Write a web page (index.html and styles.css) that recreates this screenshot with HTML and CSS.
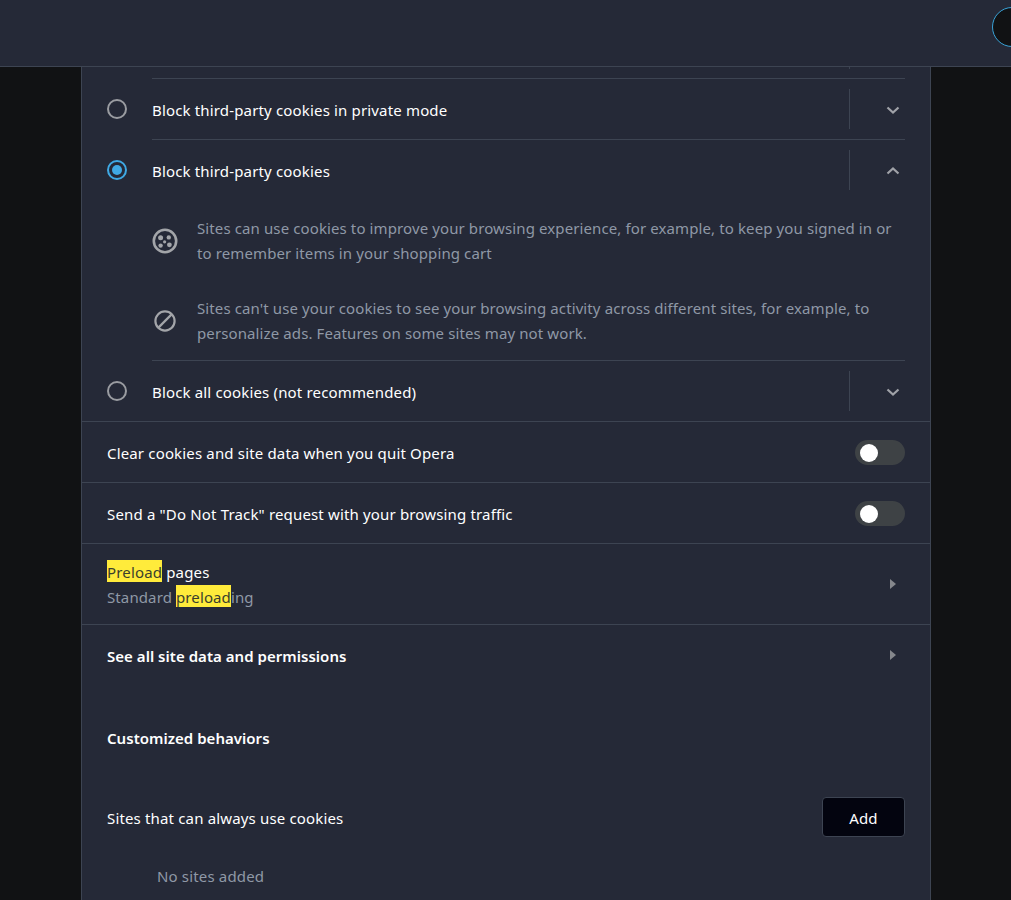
FILE: index.html
```html
<!DOCTYPE html>
<html lang="en">
<head>
<meta charset="utf-8">
<title>Cookies settings</title>
<link rel="stylesheet" href="styles.css">
</head>
<body>
<header class="topbar"><div class="search-circle"></div></header>
<main class="card">
  <div class="stub"><span class="stub-tick"></span></div>
  <div class="indent-sep"></div>
  <div class="radio-row">
    <span class="radio"></span>
    <span class="label">Block third-party cookies in private mode</span>
    <span class="vdiv"></span>
    <svg class="chev" viewBox="0 0 14 10"><path d="M1.5 2.5 7 7.6 12.5 2.5" /></svg>
  </div>
  <div class="indent-sep"></div>
  <div class="radio-row">
    <span class="radio on"></span>
    <span class="label">Block third-party cookies</span>
    <span class="vdiv"></span>
    <svg class="chev" viewBox="0 0 14 10"><path d="M1.5 7.5 7 2.4 12.5 7.5" /></svg>
  </div>
  <div class="detail">
    <div class="detail-item first">
      <svg class="detail-icon" viewBox="0 0 26 26"><circle cx="13" cy="13" r="11.2" class="ring thick"/><circle cx="8.6" cy="9.8" r="2.5" class="dot"/><circle cx="16.8" cy="9.4" r="2.2" class="dot"/><circle cx="12.6" cy="13.8" r="1.6" class="dot"/><circle cx="8.6" cy="17.6" r="2.2" class="dot"/><circle cx="17.4" cy="16.8" r="2.4" class="dot"/></svg>
      <p>Sites can use cookies to improve your browsing experience, for example, to keep you signed in or to remember items in your shopping cart</p>
    </div>
    <div class="detail-item second">
      <svg class="detail-icon" viewBox="0 0 26 26"><circle cx="13" cy="13" r="9.6" class="ring"/><path d="M6.4 19.6 19.6 6.4" class="ring"/></svg>
      <p>Sites can't use your cookies to see your browsing activity across different sites, for example, to personalize ads. Features on some sites may not work.</p>
    </div>
  </div>
  <div class="indent-sep"></div>
  <div class="radio-row">
    <span class="radio"></span>
    <span class="label">Block all cookies (not recommended)</span>
    <span class="vdiv"></span>
    <svg class="chev" viewBox="0 0 14 10"><path d="M1.5 2.5 7 7.6 12.5 2.5" /></svg>
  </div>
  <div class="row bordered">
    <span class="label">Clear cookies and site data when you quit Opera</span>
    <span class="toggle"><span class="knob"></span></span>
  </div>
  <div class="row bordered">
    <span class="label">Send a "Do Not Track" request with your browsing traffic</span>
    <span class="toggle"><span class="knob"></span></span>
  </div>
  <div class="row bordered tall">
    <div class="two-line">
      <div><mark>Preload</mark> pages</div>
      <div class="sub">Standard <mark>preload</mark>ing</div>
    </div>
    <span class="arrow"></span>
  </div>
  <div class="row bordered">
    <span class="label strong">See all site data and permissions</span>
    <span class="arrow"></span>
  </div>
  <h2 class="section-title">Customized behaviors</h2>
  <div class="add-row">
    <span class="label">Sites that can always use cookies</span>
    <button class="add-btn" type="button">Add</button>
  </div>
  <div class="empty">No sites added</div>
</main>
</body>
</html>
```
FILE: styles.css
```css
* { box-sizing: border-box; }
body {
  margin: 0;
  height: 900px;
  overflow: hidden;
  background: #111214;
  font-family: "Noto Sans", "Open Sans", sans-serif;
  font-size: 15px;
  letter-spacing: 0.16px;
  color: #fff;
}
.topbar {
  height: 67px;
  background: #252937;
  border-bottom: 1px solid #3d4452;
  display: flex;
  justify-content: flex-end;
  align-items: flex-start;
  overflow: hidden;
}
.search-circle {
  flex: none;
  width: 40px;
  height: 40px;
  margin: 7px -21px 0 0;
  border-radius: 50%;
  background: #111214;
  border: 1px solid #39a3d8;
}
.card {
  width: 850px;
  height: 833px;
  margin-left: 81px;
  background: #252937;
  border-left: 1px solid #3d4452;
  border-right: 1px solid #3d4452;
  overflow: hidden;
}
.stub { height: 11px; padding-left: 767px; }
.stub-tick { display: block; width: 1px; height: 2px; background: #3d4452; }
.indent-sep { height: 1px; margin: 0 25px 0 70px; background: #3d4452; }
.radio-row, .row, .add-row {
  display: flex;
  align-items: center;
  padding: 0 25px;
}
.radio-row { height: 60px; }
.radio {
  flex: none;
  width: 20px;
  height: 20px;
  margin-right: 25px;
  border-radius: 50%;
  border: 2px solid #9a9ca1;
  position: relative;
}
.radio.on { border-color: #3fa9e4; }
.radio.on::after {
  content: "";
  position: absolute;
  inset: 3px;
  border-radius: 50%;
  background: #3fa9e4;
}
.label { color: #fff; white-space: nowrap; line-height: 25px; padding-top: 2px; }
.radio-row .label { flex: 1; }
.vdiv { flex: none; width: 1px; height: 40px; background: #3d4452; }
.chev { flex: none; width: 14px; height: 10px; margin: 1px 5px 0 36px; }
.chev path { fill: none; stroke: #a0a2a8; stroke-width: 2.2; }
.detail { height: 160px; padding: 0 25px 0 70px; }
.detail-item { display: flex; align-items: center; color: #8f98a6; line-height: 25px; letter-spacing: 0.11px; }
.detail-item p { margin: 0; flex: 1; }
.detail-item.first { height: 66px; padding-top: 16px; }
.detail-item.second { height: 50px; margin-top: 30px; }
.detail-icon { flex: none; width: 26px; height: 26px; margin-right: 19px; }
.ring { fill: none; stroke: #a3a5a9; stroke-width: 2.2; }
.ring.thick { stroke-width: 2.6; }
.dot { fill: #a3a5a9; }
.row { height: 61px; justify-content: space-between; }
.bordered { border-top: 1px solid #3d4452; }
.tall { height: 81px; }
.toggle {
  flex: none;
  width: 50px;
  height: 25px;
  border-radius: 13px;
  background: #3e4245;
  padding: 4px 5px;
}
.knob { display: block; width: 18px; height: 18px; border-radius: 50%; background: #fff; }
.two-line { line-height: 25px; padding-top: 2px; }
.sub { color: #8f98a6; letter-spacing: 0.11px; }
mark { background: #ffeb3b; color: #3a3f2d; padding: 2px 0 0; }
.arrow {
  flex: none;
  width: 0;
  height: 0;
  margin-right: 9px;
  border-left: 6px solid #85878c;
  border-top: 5.5px solid transparent;
  border-bottom: 5.5px solid transparent;
}
.strong { font-weight: 600; letter-spacing: 0.03px; }
.section-title {
  margin: 41px 0 0;
  padding-left: 25px;
  font-size: 15px;
  font-weight: 600;
  line-height: 25px;
  letter-spacing: 0.03px;
}
.add-row { justify-content: space-between; margin-top: 45px; height: 41px; }
.add-row .label { padding-top: 4px; }
.add-btn {
  width: 83px;
  height: 40px;
  padding: 2px 0 0;
  border-radius: 4px;
  border: 1px solid #3d4452;
  background: #03040f;
  color: #fff;
  font: inherit;
  letter-spacing: inherit;
}
.empty { margin-top: 27px; padding-left: 75px; color: #8f98a6; line-height: 25px; }
```
